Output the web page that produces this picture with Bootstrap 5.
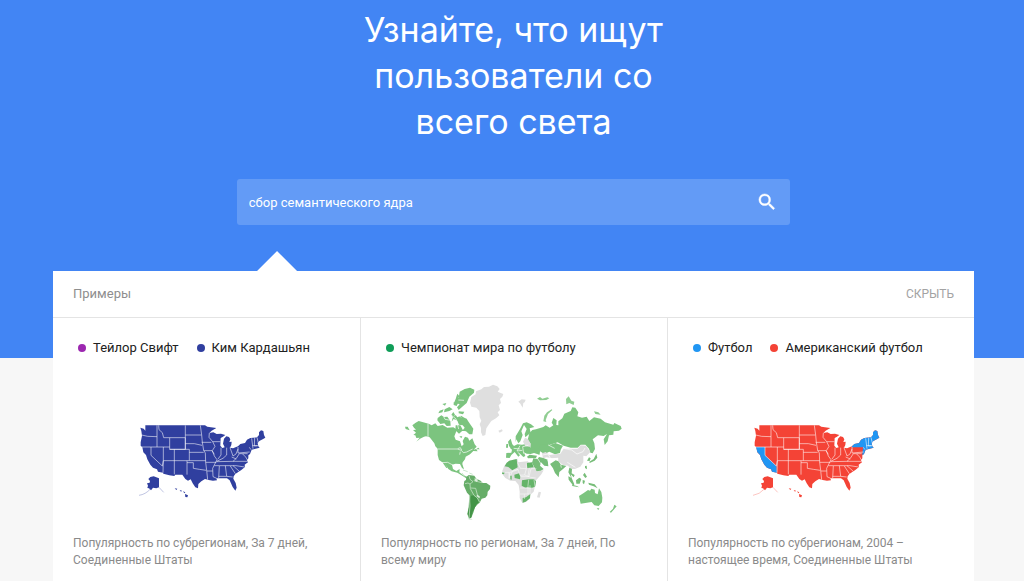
<!DOCTYPE html>
<html lang="ru">
<head>
<meta charset="utf-8">
<meta name="viewport" content="width=device-width, initial-scale=1">
<title>Узнайте, что ищут пользователи со всего света</title>
<link rel="stylesheet" href="https://cdn.jsdelivr.net/npm/bootstrap@5.3.0/dist/css/bootstrap.min.css">
<style>
  body { font-family: Roboto, "Noto Sans", sans-serif; background: #f7f7f7; overflow-x: hidden; }
  .page { background: linear-gradient(#4285f4, #4285f4) top / 100% 358px no-repeat; padding-left: 3px; }
  .headline { font-family: Inter, Roboto, sans-serif; font-size: 34px; line-height: 46px; font-weight: 400; max-width: 320px; padding-top: 7px; }
  .search { width: 54.2%; height: 46px; margin-top: 34px; background: #639bf6; border-radius: 3px; }
  .search input, .search input:focus { background: transparent; color: #fff; border: 0; box-shadow: none; font-size: 13px; padding: 0 12px; }
  .search button { border: 0; padding: 0 14px; line-height: 0; }
  .examples { width: 90.2%; margin-top: 46px; background: #fff; }
  .pointer { left: 204px; bottom: 100%; width: 40px; height: 20px; background: #fff; clip-path: polygon(50% 0, 100% 100%, 0 100%); }
  .examples-head { height: 47px; padding: 0 20px; border-bottom: 1px solid #e4e4e4; font-size: 13px; color: #8e8e8e; }
  .examples-head h2 { font-size: 13px; font-weight: 400; }
  .hide-btn { font-size: 12px; color: #a3a3a3; }
  .example { color: #8a8a8a; padding: 20px; height: 264px; }
  .example + .example { border-left: 1px solid #e4e4e4; }
  .terms { font-size: 13px; line-height: 20px; color: #212121; gap: 18px; padding-left: 5px; }
  .dot { width: 8px; height: 8px; margin-right: 7px; }
  .map-box { height: 150px; margin-top: 17px; }
  .map-low { padding: 20px 6px 0 0; }
  .caption-text { font-size: 12px; line-height: 17px; margin-top: 10px; }
</style>
</head>
<body>
<svg width="0" height="0" class="position-absolute" aria-hidden="true">
  <symbol id="us-land" viewBox="0 0 435 270">
    <path fill="currentColor" d="M28 38 38 41 43 47 43 31H222L229 35 256 39 242 47 235 54 247 52 257 57 270 56 283 60 276 65 269 69 268 92 274 99 281 97 276 86 279 71 286 64 294 66 298 73 295 81 302 80 301 90 297 98 306 100 321 94 328 87 342 84 348 74 358 69 378 67 384 60 384 52 390 46 397 48 399 60 403 68 395 73 385 78 380 85 382 94 386 98 374 101 362 104 357 117 352 121 352 130 348 136 351 142 341 149 342 156 331 165 323 170 313 177 308 184 307 191 314 204 317 218 313 227 305 216 300 205 296 196 288 190 274 190 256 190 258 196 246 197 233 195 222 192 211 199 202 207 201 220 193 217 185 205 179 193 171 197 163 192 154 179H133L130 183 115 181 97 176 96 173 81 170 78 163 66 158 58 149 49 133 45 120 37 112 34 97 29 92 29 82 33 62 31 48Z"/>
    <path fill="currentColor" d="M52 192 58 186 68 184 84 190V217L76 220 66 218 60 226 54 220 49 219 51 212 48 205 56 203 57 198Z"/>
    <path fill="currentColor" d="M131 220l8 1-3 4zM146 225l7 2-3 3zM156 229l7 3-3 3zM162 237l9 4-2 6-6-1z"/>
    <path fill="none" stroke="currentColor" stroke-width="3" opacity=".3" d="M58 222Q44 238 24 241M84 217 98 232"/>
  </symbol>
  <symbol id="us-lines" viewBox="0 0 435 270">
    <path fill="none" stroke="#fff" stroke-opacity=".68" stroke-width="2.5" d="M32 60 50 64 78 65M78 31V96M32 96H116M83 31 84 44 94 53 98 68H116M116 68H163V103H116ZM163 31V103M60 96V121L94 153 97 137V96M116 103H175V137H97M130 103V178M97 137 96 173M168 137V179M163 60H211M163 86H190L213 91M175 112H218M175 137H224M168 143H187V160L205 163 226 166M208 31 212 60 214 82 218 106 223 114 224 142 227 166 230 194M212 82H241M218 107H243L250 118M235 54 234 67 245 80H268M245 80 252 94 244 107 250 123 258 134M224 142H256M228 168H245M270 98V120L261 132M287 98V120L276 130 257 139M297 98 306 123 315 117 321 102M257 140 306 139 316 130 325 116H350M250 152H315L341 156M306 139H350M258 134 245 160 246 185 257 190M265 153 263 189M283 152 287 184M298 153 313 176M263 184H287L305 186M306 152 325 169M316 132 302 126M321 96V114L356 111M335 117 344 126 350 136M355 97 360 104M362 70 366 101M371 68 370 93 382 92M364 92H379M378 67 382 84"/>
  </symbol>
</svg>

<div class="page">
  <header class="text-center text-white">
    <h1 class="headline mx-auto mb-0">Узнайте, что ищут пользователи со всего света</h1>
    <form class="search mx-auto d-flex align-items-center" role="search" onsubmit="return false">
      <input class="form-control h-100" type="text" value="сбор семантического ядра" aria-label="Поисковый запрос">
      <button class="btn" type="submit" aria-label="Найти">
        <svg width="18" height="18" viewBox="2 2 20 20" fill="#fff" stroke="#fff" stroke-width=".5"><path d="M15.5 14h-.79l-.28-.27A6.47 6.47 0 0 0 16 9.500 6.500 6.500 0 1 0 9.500 16c1.610 0 3.090-.590 4.230-1.570l.27.28v.79l5 4.990L20.490 19zm-6 0a4.500 4.500 0 1 1 0-9 4.500 4.500 0 0 1 0 9z"/></svg>
      </button>
    </form>
  </header>

  <main class="examples mx-auto position-relative">
    <div class="pointer position-absolute"></div>
    <div class="examples-head d-flex align-items-center justify-content-between">
      <h2 class="mb-0">Примеры</h2>
      <button class="btn hide-btn p-0 border-0" type="button">СКРЫТЬ</button>
    </div>
    <div class="row g-0">
      <section class="example col-4">
        <div class="terms d-flex">
          <span class="d-flex align-items-center"><i class="dot rounded-circle" style="background:#9c27b0"></i>Тейлор Свифт</span>
          <span class="d-flex align-items-center"><i class="dot rounded-circle" style="background:#303f9f"></i>Ким Кардашьян</span>
        </div>
        <div class="map-box map-low d-flex align-items-center justify-content-center">
          <svg width="145" height="90" viewBox="0 0 435 270" color="#303f9f" role="img" aria-label="Карта США">
            <use href="#us-land"/><use href="#us-lines"/>
          </svg>
        </div>
        <p class="caption-text mb-0">Популярность по субрегионам, За 7 дней, Соединенные Штаты</p>
      </section>

      <section class="example col-4">
        <div class="terms d-flex">
          <span class="d-flex align-items-center"><i class="dot rounded-circle" style="background:#0f9d58"></i>Чемпионат мира по футболу</span>
        </div>
        <div class="map-box d-flex align-items-center justify-content-center">
          <svg width="240" height="150" viewBox="0 0 720 450" role="img" aria-label="Карта мира">
            <!-- Greenland, Iceland, Svalbard -->
            <g fill="#dfdfdf">
              <path d="M228 83 232 66 245 58 246 49 262 43 270 36 285 35 297 29 310 34 317 42 311 50 328 57 325 65 318 72 321 84 314 91 318 105 311 112 316 121 306 130 292 138 284 149 277 160 274 180 266 183 261 172 261 159 257 148 262 137 257 127 256 108 247 98 232 95Z"/>
              <path d="M313 167 324 163 326 168 317 173ZM373 80l10-7 12 1-3 8-4 2-2 14-8-13z"/>
            </g>
            <!-- North America -->
            <g fill="#7cc47f">
              <path d="M60 158 55 151 65 143 74 138 104 146 113 151 124 145 131 153 146 150 160 158 178 157 186 162 187 169 181 184 185 194 198 199 203 214 209 208 206 198 213 185 222 188 226 197 235 190 242 208 248 215 239 224 246 222 251 229 238 228 228 238 215 245 213 253 206 262 205 267 210 283 204 279 198 267 185 266 174 269 177 282 187 288 197 282 196 292 206 299 221 306 219 311 205 302 190 293 173 289 163 282 152 265 160 278 157 279 145 262 135 255 131 240 131 221 124 214 121 205 107 187 96 184 90 185 78 191 67 200 77 188 67 189 64 181 58 180 66 173 57 165 66 164ZM33 155l8 0 6 11-12-4zM246 223l7-5 4 5z"/>
              <path d="M180 84l7-17 7 2 3-19 15-8 16-4 13 6-1 9-14 12-8 19-14 12-10 9-5-8 8-9-9-3zM190 56l6 7-5 10-5-5zM131 129l11-8 8 5 10-1 9 13 1 14-12 1-7-8-12 2-9-11zM152 103l14-7 10 7-10 5-16 4zM137 107l12-4-4 9-12 3zM176 128l9-8 5 7 11-5 10 6 7 3 6 10 14 20-3 17-9 0-10-9-11-2 7-9-6-7-11-2-5-12-11-5-6 8zM185 151l14 0 8 15-12 10-11-10zM179 82l13 3-4 8-9-3zM194 109l17 1-4 8-13-3zM172 119l6-8 5 8-5 9zM145 87l12-3-4 8zM196 184l9 0-3 6z"/>
            </g>
            <path fill="none" stroke="#fff" stroke-width="2" d="M102 146V188M132 222H190L202 226 208 233 218 231 236 222M143 263 161 262 178 271M191 221l8-3 4 7M199 230l-2 9M182 111l20 16M162 112l24 20 8 30M149 125l4 8 18 3M193 75l17 1"/>
            <path fill="none" stroke="#c9e7cc" stroke-width="3" d="M207 285 221 290M226 294 236 298M204 294 212 304"/>
            <!-- South America -->
            <path fill="#66ad68" d="M217 306 224 300 241 302 247 311 260 317 266 324 277 324 289 332 288 342 281 350 280 361 274 368 263 371 257 383 251 388 243 397 239 410 232 428 225 431 220 417 224 395 226 361 219 353 209 331 211 318 216 315Z"/>
            <path fill="#439447" d="M231 362 239 361 249 368 255 382 248 388 242 399 236 410 232 426 227 431 221 417 226 393Z"/>
            <path fill="#deeede" d="M242 309l10 5-3 7-7-4zM249 358l9 7-2 5-8-6zM221 431l10-1 5 5-9 0z"/>
            <path fill="none" stroke="#d4ead4" stroke-width="2" d="M225 302 228 313 237 320 228 327 229 341 240 361 250 369 257 382M213 326 222 324 228 327M226 361 228 393 225 430M239 317 264 323M230 339 245 340 250 359"/>
            <!-- Russia, Europe and northern islands -->
            <g fill="#7cc47f">
              <path d="M406 175 415 165 426 163 448 156 455 151 467 158 478 151 473 143 478 129 488 136 487 150 493 151 493 139 505 130 511 116 530 108 535 97 544 98 553 112 550 124 564 128 578 125 586 138 600 127 620 131 633 142 658 149 661 144 680 153 683 161 675 167 659 169 658 179 645 181 641 199 632 210 629 193 639 177 629 183 612 181 596 193 601 205 603 222 596 235 589 233 585 221 574 209 560 209 551 218 530 218 509 212 491 202 464 211 439 218 437 239 420 230 409 218 409 205 401 195Z"/>
              <path d="M441 207 466 211 484 204 507 212 500 224 498 234 483 238 466 230 451 237 438 229 434 219ZM365 202 365 184 378 162 387 145 398 142 411 148 421 156 407 160 410 173 394 187 392 177 398 162 390 150 382 169 386 180 379 199 373 205 367 193ZM342 200l8-9 5 17 8 8-14 2-4-5zM337 207l5 0 0 11-6 0zM337 234 352 233 354 224 348 219 360 213 370 208 384 209 396 207 408 211 409 218 420 221 431 229 436 239 420 234 410 237 398 236 390 232 394 243 388 246 378 236 370 230 378 241 373 245 362 231 352 240 347 249 336 248Z"/>
              <path d="M448 139 451 122 459 112 473 103 475 105 462 117 455 135 457 141ZM516 72l8-8 8 13 9 3-2 10-13-6-9 4zM600 109l13 3 7 7-16-2zM429 71l9-5 7 5 15-4 6 3-9 5-19 1z" fill-opacity=".85"/>
            </g>
            <!-- Asia and the Middle East -->
            <path fill="#dedede" d="M387 200 393 188 402 192 410 206 409 216 394 213ZM444 235 455 231 467 240 483 238 499 236 509 221 530 221 551 221 560 211 575 212 589 231 577 244 568 242 568 262 559 275 543 282 530 282 522 272 507 270 493 259 492 248 474 250 458 247 447 250Z"/>
            <path fill="#77bd79" d="M399 245 407 239 429 242 426 249 402 250ZM414 263 418 250 431 252 435 246 448 249 461 254 463 274 451 272 441 262 438 272 449 282 440 288 428 291ZM468 267 485 256 493 259 501 269 517 273 508 281 496 291 494 307 483 294 477 280ZM526 278l8 4-1 13 9 5-3 7-9-9 4 14-11-20zM523 304l10 5 8 19-3 4-14-18zM546 316l10-8 6 4-5 14-10 0zM566 315l7 2-3 11-4-4zM567 300l5-7 7 12-5 4zM583 323l19 5 9 12-12-6-14-5zM534 329l15 4 6 4-20-4zM579 257l6-10 5 3-3 8zM586 260l13-8 5-10 3-6 3 12-8 9-15 7zM573 273l5-1 1 11-6-4z"/>
            <path fill="none" stroke="#fff" stroke-width="2" d="M511 221 533 225 549 237 567 230 573 219M446 240 462 237 470 251 493 251M431 251l15 23M461 255l9 20M500 269l2 9M403 211l-17 4 3 21M378 212l-9 16 16-2M359 220l20 2M463 210l19 10M520 262l24 15"/>
            <!-- Africa -->
            <path fill="#dedede" d="M325 287 331 272 345 257 370 251 373 262 401 259 419 274 428 289 449 286 441 299 425 317 423 334 419 350 409 359 405 373 396 381 385 384 377 369 377 350 374 330 364 318 349 317 334 309 324 296ZM434 350l7 2-4 16-8-1z"/>
            <path fill="#65b469" d="M338 263 346 257 368 252 371 277 355 286 343 276 332 274ZM398 264 414 262 419 277 400 279ZM361 299l15-4 3 10-1 8-16-4zM384 316l20-3 16 0 6 6-2 15-10 6-13-3-7 1-11-6zM349 302l4 0 0 12-4-1zM324 291l8 1-2 6-6-2zM386 369l10-2 9-7 4-2-1 12-13 10-9 3z"/>
            <path fill="none" stroke="#fff" stroke-width="1.5" d="M371 263 379 280 397 281 397 264M397 281 392 300 378 301 372 283 356 287 350 301M324 292H345V310M379 305H405L411 281H427M404 314 402 331V358M420 314 423 334M377 339H419M378 357H405M347 310 346 293 372 284M392 300 410 307 425 309M391 358V372M406 279 402 304M408 331 408 357"/>
            <!-- Oceania -->
            <path fill="#7cc47f" d="M555 363 568 355 582 345 588 347 592 341 602 344 603 354 611 358 615 340 622 351 625 368 624 382 614 393 601 391 593 381 574 384 560 386ZM608 400l8 0-3 5zM661 389l7 5-9 10-8 9-4-2 10-10z"/>
          </svg>
        </div>
        <p class="caption-text mb-0">Популярность по регионам, За 7 дней, По всему миру</p>
      </section>

      <section class="example col-4">
        <div class="terms d-flex">
          <span class="d-flex align-items-center"><i class="dot rounded-circle" style="background:#2196f3"></i>Футбол</span>
          <span class="d-flex align-items-center"><i class="dot rounded-circle" style="background:#f44336"></i>Американский футбол</span>
        </div>
        <div class="map-box map-low d-flex align-items-center justify-content-center">
          <svg width="145" height="90" viewBox="0 0 435 270" color="#f44336" role="img" aria-label="Карта США">
            <use href="#us-land"/>
            <path fill="#2196f3" d="M33 96H60V121L94 153 96 173 81 170 78 163 66 158 58 149 49 133 45 120 37 112ZM321 94 328 87 342 84 348 74 358 69 378 67 384 60 384 52 390 46 397 48 399 60 403 68 395 73 385 78 380 85 382 94 386 98 374 101 362 104 357 117 352 121 354 97 321 97Z"/>
            <use href="#us-lines"/>
          </svg>
        </div>
        <p class="caption-text mb-0">Популярность по субрегионам, 2004 – настоящее время, Соединенные Штаты</p>
      </section>
    </div>
  </main>
</div>
<script src="https://cdn.jsdelivr.net/npm/bootstrap@5.3.0/dist/js/bootstrap.bundle.min.js"></script>
</body>
</html>
